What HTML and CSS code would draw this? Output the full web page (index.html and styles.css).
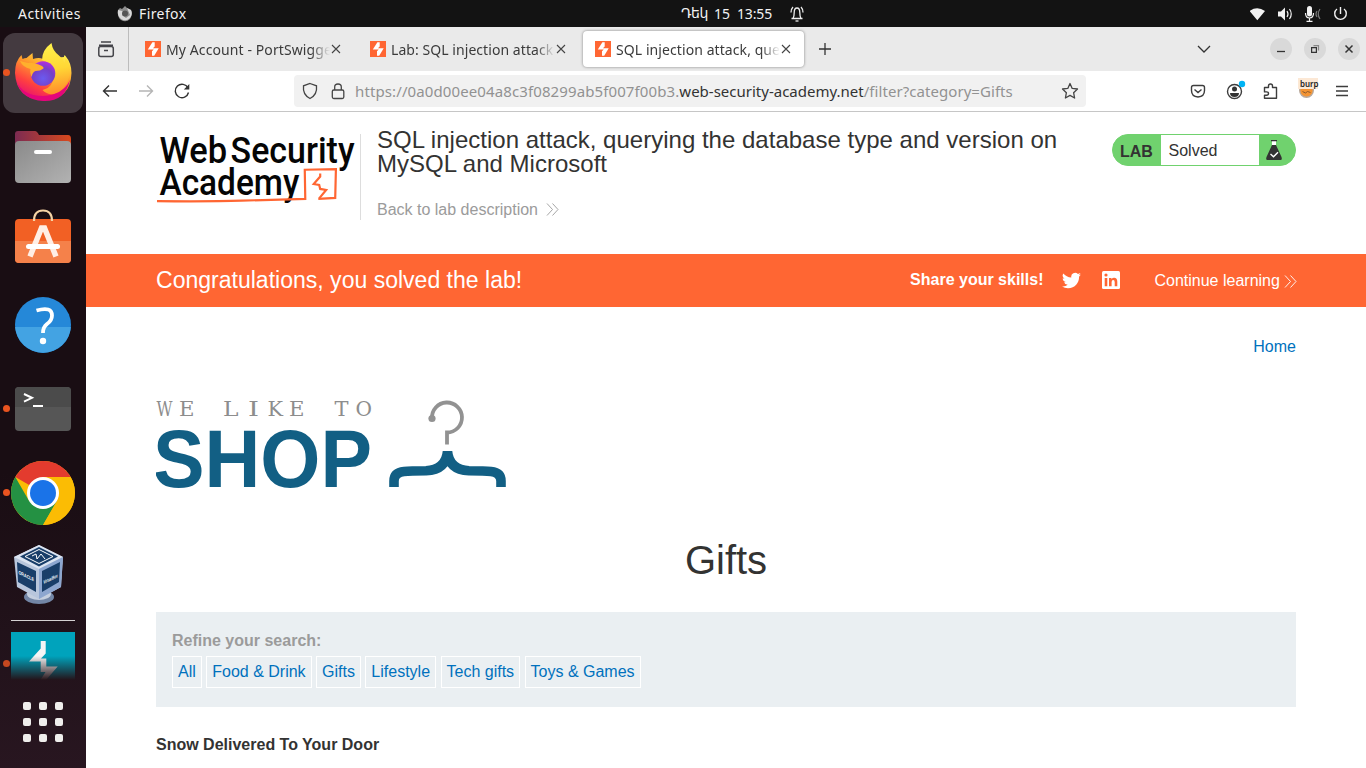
FILE: index.html
```html
<!DOCTYPE html>
<html lang="en">
<head>
<meta charset="utf-8">
<title>SQL injection attack, querying the database type and version</title>
<link rel="stylesheet" href="styles.css">
</head>
<body>
<svg class="defs" width="0" height="0">
  <defs>
    <linearGradient id="fire" x1=".8" y1="0" x2=".2" y2="1"><stop offset="0" stop-color="#fff44f"/><stop offset=".35" stop-color="#ffa52b"/><stop offset=".7" stop-color="#ff4040"/><stop offset="1" stop-color="#e4067b"/></linearGradient>
    <radialGradient id="globe" cx=".5" cy=".7" r=".7"><stop offset="0" stop-color="#6a5bf0"/><stop offset=".6" stop-color="#7540c8"/><stop offset="1" stop-color="#b52de0"/></radialGradient>
    <linearGradient id="tail" x1=".5" y1="0" x2=".6" y2="1"><stop offset="0" stop-color="#fff04a"/><stop offset=".5" stop-color="#ffd735"/><stop offset="1" stop-color="#ff8a2a"/></linearGradient>
    <linearGradient id="folder"><stop offset="0" stop-color="#7c2b52"/><stop offset="1" stop-color="#d9491d"/></linearGradient>
    <linearGradient id="steel" x1="0" y1="0" x2="1" y2="1"><stop offset="0" stop-color="#8a8a8a"/><stop offset="1" stop-color="#b2b2b2"/></linearGradient>
    <linearGradient id="fade" x1="0" y1="0" x2="0" y2="1"><stop offset=".5" stop-color="#241319" stop-opacity="0"/><stop offset="1" stop-color="#241319"/></linearGradient>
    <symbol id="ps" viewBox="0 0 16 16"><path fill="#ff6633" d="M0 0h16v16H0z"/><path fill="#fff" d="M7.400 1.200h2.300v4.300L7.900 7.300h5.800L9.200 14.800H7v-4.600l1.700-1.800H2.800z"/></symbol>
    <symbol id="close" viewBox="0 0 10 10"><path d="M1 1l8 8M9 1L1 9" stroke="#444" stroke-width="1.100" fill="none"/></symbol>
    <symbol id="chev" viewBox="0 0 13 13"><path d="M1 .5l5.500 6L1 12.500M6.500 .5l5.500 6-5.500 6" stroke="currentColor" stroke-width=".9" fill="none"/></symbol>
  </defs>
</svg>

<header class="topbar">
  <span class="activities">Activities</span>
  <span class="app"><svg width="16" height="16" viewBox="117 5 16 16"><path fill="#8e8e8e" d="M118 9l2-2 2 1 3-3 2 2 4 2q2 5-1 9-4 4-9 1-4-3-3-10z"/><path fill="#d9d9d9" d="M118 9l4 1 3 2-3 2 4 3 4-3-3-7 4 2q2 4-1 8-4 4-9 1-4-3-3-9z"/><circle cx="125" cy="12.500" r="3" fill="#555"/></svg><span class="app-name">Firefox</span></span>
  <span class="clock"><span class="month">Դեկ</span><span class="time">15&nbsp; 13:55</span>
    <svg width="14" height="16" viewBox="790 5 14 16" fill="none" stroke="#eee" stroke-width="1.300"><path d="M791.500 17.500h11M793 17.500q1.200-2 1.200-6 0-4.500 2.800-4.500t2.800 4.500q0 4 1.200 6M793 6q-2 2-2 5.500M801 6q2 2 2 5.500"/><path d="M795.500 20h3"/></svg></span>
  <span class="status">
    <svg width="100" height="18" viewBox="1250 4 100 18"><path fill="#f2f2f2" d="M1249.500 10q7.700-5.500 15.500 0l-7.700 9.300zM1278 10.500h3l4-4v13l-4-4h-3z"/><g stroke="#f2f2f2" fill="none" stroke-width="1.200"><path d="M1287 10q2 3 0 6M1289.500 8q3.500 5 0 10M1305.500 12q0 5 4 5t4-5M1309.500 17v3.500M1306.500 20.300h6"/><path stroke="#777" d="M1317 10q-2 3 0 6M1320 8q-3.500 5 0 10"/><path stroke-width="1.400" d="M1337 8a5.800 5.800 0 1 0 7 0M1340.500 6v7"/></g><rect x="1307" y="5" width="5" height="10.500" rx="2.500" fill="#f2f2f2"/></svg>
  </span>
</header>

<div class="desktop">
<aside class="dock">
  <div class="tile active"><svg viewBox="3 33 80 80">
    <path fill="url(#fire)" d="M15 73q0-12 6.500-18l1 4q2-1 4-1l6-5 .5 6q6-2 10 0l21-2q0-3 1.500-1 6 7 6 17-1 27-28 27T15 73z"/>
    <path fill="url(#tail)" d="M42 60q0-10 9.500-17 1 8 8 13 4 3 5 8l1-6q6 6 4 18-4 15-15 18-8 1-12-4 12-3 10.500-16-2-12-11-14z"/>
    <circle cx="43" cy="73.500" r="12.300" fill="url(#globe)"/>
    <path fill="#ffb02d" d="M20 61l8 2q5-1 14 3 2 1 1.500 2.500-3 2.500-8 2.500-3 1-4 6-2-5-1-8-8-2-10.500-8z"/>
    <path fill="#e4067b" d="M16 80q6 16 27 16 20-1 27-16-5 22-27 21-21-1-27-21z"/></svg></div>
  <div class="tile"><svg viewBox="3 117 80 80"><path fill="url(#folder)" d="M15 145v-11q0-3 3-3h17q2 0 4 4h29q3 0 3 4v8z"/><rect x="15" y="141" width="56" height="42" rx="4" fill="url(#steel)"/><path d="M36 152h14" stroke="#fff" stroke-width="4" stroke-linecap="round"/></svg></div>
  <div class="tile"><svg viewBox="3 201 80 80"><rect x="15" y="219" width="56" height="44" rx="4" fill="#f26024"/><path fill="#f5814a" d="M15 241h56v18q0 4-4 4H19q-4 0-4-4z"/><path d="M34 221q0-10.500 9-10.500t9 10.500" fill="none" stroke="#f5d3a4" stroke-width="2.200"/><path d="M30 256.500L41.500 228h3L56 256.500" fill="none" stroke="#ffeee5" stroke-width="5.500"/><path d="M28.500 246.500h29" stroke="#fff" stroke-width="5" stroke-linecap="round"/></svg></div>
  <div class="tile"><svg viewBox="3 285 80 80"><circle cx="43" cy="325" r="28" fill="#2588d8"/><path fill="#43a3e3" d="M15.100 327a28 28 0 0 0 55.800 0z"/><path d="M36.500 310.500Q52 306 52 315.500q0 5-5 8.500-4 3-4 9" fill="none" stroke="#fff" stroke-width="3.800"/><circle cx="43" cy="341" r="3.200" fill="#fff"/></svg></div>
  <div class="tile running"><svg viewBox="3 369 80 80"><rect x="15" y="387" width="56" height="44" rx="4" fill="#565656"/><path fill="#4b4b4b" d="M15 407v-16q0-4 4-4h48q4 0 4 4v16z"/><path d="M24 394l8 3.800-8 3.800M33 406h10" fill="none" stroke="#fff" stroke-width="2"/></svg></div>
  <div class="tile running"><svg viewBox="3 453 80 80"><circle cx="43" cy="493" r="32" fill="#fbbc04"/><path fill="#e33b2e" d="M43 493L15.300 477a32 32 0 0 1 55.400 0z"/><path fill="#249143" d="M15.300 477A32 32 0 0 0 43 525l13.900-24L43 493l-13.900 8z"/><path fill="#fbbc04" d="M43 477h27.700A32 32 0 0 1 43 525l14-24z"/><circle cx="43" cy="493" r="16" fill="#fff"/><circle cx="43" cy="493" r="13" fill="#1a73e8"/></svg></div>
  <div class="tile"><svg viewBox="3 537 80 80"><ellipse cx="39" cy="597" rx="15" ry="7" fill="#7386a6"/><ellipse cx="39" cy="594" rx="12" ry="6" fill="#c5cfdf"/><path fill="#b8c6dc" d="M14 557l25-12 24 12-2 30-22 12-22-12z"/><path fill="#dce4f1" d="M14 557l25-12 24 12-24 12z"/><path fill="#8da6cf" d="M63 557l-24 12v30l22-12z"/><path fill="#193e69" d="M20 556.500l19-9.500 19 9.500-19 10zM17 562l19 9v21l-18-10zM60 562l-18 9v21l17-10z"/><path d="M25 556.500l14-7 14 7-14 7zM32 556l4-2 1 5 4-5 4 5" fill="none" stroke="#fff"/><text class="box-label" transform="matrix(1 .48 0 1 18.500 574)" textLength="15.500" lengthAdjust="spacingAndGlyphs">ORACLE</text><text class="box-label" transform="matrix(1 -.48 0 1 43.500 584)" textLength="14" lengthAdjust="spacingAndGlyphs">VirtualBox</text></svg></div>
  <div class="dock-line"></div>
  <div class="burp running"><svg width="64" height="48" viewBox="11 632 64 48"><path fill="#00a3bc" d="M11 632h64v48H11z"/><path fill="#f5f5f5" d="M40.700 641h5v12.500l-4.700 5h5.300v8h11.400L46 680h-5.500l5-8h-4.800v-10.500H29l11.700-13z"/><path fill="url(#fade)" d="M11 632h64v48H11z"/></svg></div>
  <div class="apps"><i></i><i></i><i></i><i></i><i></i><i></i><i></i><i></i><i></i></div>
</aside>

<main class="window">
  <div class="tabs">
    <div class="recent"><svg width="18" height="18" viewBox="97 40 18 18" fill="none" stroke="#45454a" stroke-width="1.500"><path d="M101 42h10M99 45.200h14"/><rect x="98.800" y="46.500" width="14.500" height="10" rx="2"/><path d="M104 50.500h4"/></svg></div>
    <div class="tab"><svg class="fav"><use href="#ps"/></svg><span class="tab-title t1">My Account - PortSwigge</span><svg class="x"><use href="#close"/></svg></div>
    <div class="tab"><svg class="fav"><use href="#ps"/></svg><span class="tab-title t2">Lab: SQL injection attack</span><svg class="x"><use href="#close"/></svg></div>
    <div class="tab current"><svg class="fav"><use href="#ps"/></svg><span class="tab-title t3">SQL injection attack, que</span><svg class="x"><use href="#close"/></svg></div>
    <svg class="plus" width="14" height="14" viewBox="0 0 14 14"><path d="M7 1v12M1 7h12" stroke="#333" stroke-width="1.300"/></svg>
    <svg class="down" width="14" height="10" viewBox="0 0 14 10"><path d="M1 2l6 6 6-6" fill="none" stroke="#333" stroke-width="1.300"/></svg>
    <div class="controls">
      <span><svg viewBox="0 0 22 22"><path d="M7 13.500h8" stroke="#333" stroke-width="1.300"/></svg></span>
      <span><svg viewBox="0 0 22 22" fill="none" stroke="#333" stroke-width="1.200"><path d="M7.600 9.600h4.800v4.800H7.600z"/><path stroke="#888" d="M9.500 7.600h5v5"/></svg></span>
      <span><svg viewBox="0 0 22 22"><path d="M7.500 7.500l7 7M14.500 7.500l-7 7" stroke="#333" stroke-width="1.500"/></svg></span>
    </div>
  </div>
  <div class="nav">
    <svg width="110" height="40" viewBox="86 71 110 40" fill="none" stroke="#333" stroke-width="1.400"><path d="M117 91h-13.500M109 85.500l-5.500 5.500 5.500 5.500"/><path stroke="#b5b5b5" d="M139 91h13.500M147 85.500l5.500 5.500-5.500 5.500"/><path d="M188 88a6.700 6.700 0 1 0 .5 4.500"/><path fill="#333" stroke="none" d="M189.300 84v5.500h-5.500z"/></svg>
    <div class="url">
      <svg width="50" height="32" viewBox="300 75 50 32" fill="none" stroke="#454545" stroke-width="1.300"><path d="M310 83.500l6.500 2.300q1 9-6.500 12.700-7.500-3.700-6.500-12.700z"/><rect x="332.300" y="90" width="11.500" height="8.500" rx="1.500"/><path d="M334.700 90v-3q0-3 3.300-3t3.300 3v3"/></svg>
      <span class="address"><span class="u1">https://0a0d00ee04a8c3f08299ab5f007f00b3.</span><b>web-security-academy.net</b><span class="u3">/filter?category=Gifts</span></span>
      <svg class="star" width="18" height="18" viewBox="0 0 18 18"><path d="M9 1.500l2.200 4.900 5.300.6-3.900 3.700 1 5.300L9 13.400 4.400 16l1-5.300L1.500 7l5.300-.6z" fill="none" stroke="#454545" stroke-width="1.300" stroke-linejoin="round"/></svg>
    </div>
    <svg class="tools" width="170" height="30" viewBox="1186 76 170 30" fill="none" stroke="#3d3d3d" stroke-width="1.400"><path d="M1193.500 85.500h9q2 0 2 2v3q0 6-6.500 6.500-6.500-.5-6.500-6.500v-3q0-2 2-2zM1194.500 89.500l3.500 3 3.500-3"/><circle cx="1234.500" cy="91.500" r="7"/><circle cx="1234.500" cy="89" r="2.500" fill="#333" stroke="none"/><path fill="#333" stroke="none" d="M1230 93h9q0 4-4.500 4t-4.500-4z"/><circle cx="1242" cy="84" r="3.200" fill="#00b3f4" stroke="none"/><path d="M1264.500 87.500h4v-1.500q0-2 2-2t2 2v1.500h4v10.800h-12v-3h2q2 0 2-1.700t-2-1.700h-2z" stroke-linejoin="round"/><circle cx="1306.500" cy="90.500" r="6.800" fill="#f49433" stroke="#b8a99d"/><path d="M1302.500 91.500l3 1.500 2-1.500 3 1" stroke="#8a5a2e" stroke-width="1"/><path fill="#fce8d5" stroke="none" d="M1298 78h20v11h-20z"/><path d="M1336 86.500h12M1336 91h12M1336 95.500h12"/><text class="burp-label" x="1300" y="87" textLength="18.500" lengthAdjust="spacingAndGlyphs">burp</text></svg>
  </div>

  <div class="page">
    <div class="lab-head">
      <svg class="academy" width="205" height="86" viewBox="156 134 205 86"><g class="logo-text"><text x="159.500" y="162.500" textLength="68" lengthAdjust="spacingAndGlyphs">Web</text><text x="231" y="162.500" textLength="124.500" lengthAdjust="spacingAndGlyphs">Security</text><text x="159.500" y="195.500" textLength="140.500" lengthAdjust="spacingAndGlyphs">Academy</text></g><path d="M157 201.300q55 .5 85-.5l64-1.800-.5-29.300 31.300-.7-.7 29-17 1" fill="none" stroke="#ff6633" stroke-width="2.200"/><path d="M321 173.500v3l-6.500 7.500 5.500 1 1 4 6 1-7 8.500" fill="none" stroke="#ff6633" stroke-width="2.200"/></svg>
      <div class="lab-title"><h2>SQL injection attack, querying the database type and version on MySQL and Microsoft</h2><a class="back">Back to lab description <svg class="chev"><use href="#chev"/></svg></a></div>
      <div class="badge"><strong>LAB</strong><span>Solved</span><svg width="36" height="30" viewBox="1259 135 36 30"><path fill="#fff" d="M1272 141h4v6h-4z"/><path fill="#333" d="M1271 140h6v1.300h-6zM1272 145h4l5.500 12q1 3-1 3h-13q-2 0-1-3z"/><path d="M1270.500 154l3 2.800 4.500-4.600" fill="none" stroke="#fff" stroke-width="1.400"/></svg></div>
    </div>
    <div class="congrats">
      <h4>Congratulations, you solved the lab!</h4>
      <div class="share"><strong>Share your skills!</strong>
        <svg class="twitter" width="19" height="17" viewBox="0 2 24 20"><path fill="#fff" d="M23.950 4.570a10 10 0 0 1-2.820.77 4.960 4.960 0 0 0 2.160-2.720c-.95.550-2 .95-3.130 1.180a4.920 4.920 0 0 0-8.380 4.480C7.690 8.090 4.070 6.130 1.640 3.160a4.920 4.920 0 0 0 1.520 6.570 4.900 4.900 0 0 1-2.230-.61v.06a4.920 4.920 0 0 0 3.950 4.830 5 5 0 0 1-2.210.08 4.940 4.940 0 0 0 4.600 3.420A9.870 9.870 0 0 1 0 19.540a14 14 0 0 0 7.550 2.210c9.050 0 14-7.500 14-13.980 0-.21 0-.42-.02-.63a9.900 9.900 0 0 0 2.420-2.570z"/></svg>
        <svg class="linkedin" width="18" height="18" viewBox="0 0 18 18"><rect width="18" height="18" rx="1.500" fill="#fff"/><path fill="#ff6633" d="M2.700 7h2.600v8.300H2.700zM7 7h2.500v1.200q.9-1.400 2.600-1.400 3.200 0 3.200 3.900v4.600h-2.600v-4.100q0-2.100-1.500-2.100-1.600 0-1.600 2.100v4.100H7z"/><circle cx="4" cy="4" r="1.600" fill="#ff6633"/></svg>
        <a class="continue">Continue learning <svg class="chev"><use href="#chev"/></svg></a></div>
    </div>
    <div class="store">
      <a class="home">Home</a>
      <svg class="shop" width="352" height="92" viewBox="156 398 352 92"><g class="slogan"><text x="156.500" y="415.700" textLength="16" lengthAdjust="spacingAndGlyphs">W</text><text x="179" y="415.700" textLength="15.500" lengthAdjust="spacingAndGlyphs">E</text><text x="223" y="415.700" textLength="15.500" lengthAdjust="spacingAndGlyphs">L</text><text x="248" y="415.700" textLength="11" lengthAdjust="spacingAndGlyphs">I</text><text x="267.500" y="415.700" textLength="15.500" lengthAdjust="spacingAndGlyphs">K</text><text x="289" y="415.700" textLength="15.500" lengthAdjust="spacingAndGlyphs">E</text><text x="334.500" y="415.700" textLength="14" lengthAdjust="spacingAndGlyphs">T</text><text x="355.500" y="415.700" textLength="16.500" lengthAdjust="spacingAndGlyphs">O</text></g><text class="shop-word" x="153" y="487" textLength="219" lengthAdjust="spacingAndGlyphs">SHOP</text><path d="M432 418.500a15 15 0 1 1 15 14v12" fill="none" stroke="#929292" stroke-width="3.800"/><circle cx="432" cy="418.500" r="3.600" fill="#929292"/><path d="M394 487v-6q0-8.500 10-9.500 6-.7 22-.7 20-1 21.500-19.300 1.500 18.300 21.500 19.300 16 0 22 .7 10 1 10 9.500v6" fill="none" stroke="#125f84" stroke-width="9.600"/></svg>
      <h1>Gifts</h1>
      <section class="filters"><strong>Refine your search:</strong><div class="links"><a>All</a><a>Food &amp; Drink</a><a>Gifts</a><a>Lifestyle</a><a>Tech gifts</a><a>Toys &amp; Games</a></div></section>
      <h3>Snow Delivered To Your Door</h3>
    </div>
  </div>
</main>
</div>
</body>
</html>
```
FILE: styles.css
```css
* { box-sizing: border-box; }
body { margin: 0; width: 1366px; height: 768px; overflow: hidden; font-family: "Liberation Sans", Arial, sans-serif; font-size: 16px; color: #333332; background: #fff; }
svg { display: block; flex-shrink: 0; }
.defs { position: absolute; }
h1, h2, h3, h4 { margin: 0; font-weight: 400; }

.topbar { display: flex; align-items: center; height: 27px; background: #131313; color: #f2f2f2; font: 14px/27px "Noto Sans", "DejaVu Sans", sans-serif; white-space: nowrap; }
.activities { padding-left: 18px; width: 117px; letter-spacing: .45px; }
.app { display: flex; align-items: center; gap: 6px; width: 564px; }
.app-name { letter-spacing: .4px; }
.clock { display: flex; align-items: center; width: 569px; }
.month { font-family: "DejaVu Sans", sans-serif; font-size: 14px; width: 33px; letter-spacing: -.5px; }
.time { width: 76px; letter-spacing: -.1px; }

.desktop { display: flex; height: 741px; }
.dock { width: 86px; padding: 6px 3px 0; background: linear-gradient(#190d13 60%, #281620); display: flex; flex-direction: column; gap: 4px; flex-shrink: 0; }
.tile { width: 80px; height: 80px; border-radius: 12px; position: relative; flex-shrink: 0; }
.tile svg { width: 80px; height: 80px; }
.tile.active { background: #443a40; }
.active::before, .running::before { content: ""; position: absolute; left: 0; top: 36px; width: 7px; height: 7px; border-radius: 50%; background: #e95420; }
.dock-line { height: 1px; width: 64px; margin: -1px 8px 0; background: #d5d2d3; flex-shrink: 0; }
.burp { position: relative; margin-top: 7px; padding-left: 8px; height: 48px; flex-shrink: 0; }
.burp::before { top: 28px; background: #c54820; }
.apps { display: grid; grid-template-columns: repeat(3, 8px); gap: 8px; padding: 18px 20px 0; }
.apps i { height: 8px; border-radius: 2px; background: #efeeec; }
.box-label { font: bold 5px "Liberation Sans", sans-serif; fill: #fff; }

.window { flex: 1; min-width: 0; }
.tabs { display: flex; align-items: center; height: 44px; background: #eaeaea; font: 14px/20px "Noto Sans", sans-serif; white-space: nowrap; }
.recent { width: 43px; height: 44px; padding: 13px 0 0 11px; border-right: 1px solid #bcbcbc; margin-right: 4px; }
.tab { display: flex; align-items: center; width: 221px; height: 36px; margin-right: 4px; padding: 0 12px; border-radius: 4px; flex-shrink: 0; }
.current { background: #fff; box-shadow: 0 0 3px rgba(0,0,0,.45); }
.fav { width: 16px; height: 16px; margin-right: 5px; }
.tab-title { flex: 0 0 164px; min-width: 0; padding-top: 1px; color: #3b3b3b; -webkit-mask-image: linear-gradient(90deg, #000 145px, transparent 164px); mask-image: linear-gradient(90deg, #000 145px, transparent 164px); }
.t1 { letter-spacing: .1px; }
.t2 { letter-spacing: .06px; }
.t3 { letter-spacing: .08px; }
.x { width: 10px; height: 10px; margin-left: 1px; }
.plus { margin-left: 10px; }
.down { margin-left: 365px; }
.controls { display: flex; gap: 12px; margin-left: 59px; }
.controls span { width: 22px; height: 22px; border-radius: 50%; background: #d9d9d9; }
.nav { display: flex; align-items: center; height: 41px; border-bottom: 1px solid #c6c6c6; background: #fff; }
.url { display: flex; align-items: center; width: 792px; height: 32px; margin-left: 98px; padding-left: 6px; border-radius: 4px; background: #f1f1f1; }
.address { flex: 1; padding-left: 5px; font: 15px/20px "Noto Sans", sans-serif; color: #929292; white-space: nowrap; }
.address b { font-weight: 400; color: #333; }
.u1 { letter-spacing: .11px; }
.u3 { letter-spacing: .06px; }
.star { margin-right: 7px; }
.tools { margin-left: 100px; }
.burp-label { font: 600 9.500px "Noto Sans", sans-serif; fill: #222; stroke: none; }

.page { background: #fff; }
.lab-head { display: flex; align-items: flex-start; height: 142px; padding: 22px 70px 0; }
.academy { border-right: 1px solid #ddd; }
.lab-title { width: 700px; padding: 0 0 0 16px; margin-top: -6px; }
.lab-title h2 { font-size: 24px; line-height: 24px; letter-spacing: .01px; }
.back { display: flex; align-items: center; gap: 8px; margin-top: 24px; line-height: 19px; color: #9b9b9b; }
.chev { width: 13px; height: 13px; }
.badge { display: flex; width: 184px; height: 32px; margin-left: auto; border: 1px solid #70d26e; border-radius: 16px; background: #70d26e; line-height: 32px; overflow: hidden; }
.badge strong { width: 48px; padding: 1px 0 0 7px; }
.badge span { width: 98px; padding-left: 7.500px; background: #fff; }
.congrats { display: flex; align-items: center; justify-content: space-between; height: 53px; padding: 0 70px; background: #ff6633; color: #fff; }
.congrats h4 { font-size: 23.040px; }
.share { display: flex; align-items: center; }
.share strong { margin-top: -2px; }
.twitter { margin-left: 19px; margin-top: -1px; }
.linkedin { margin-left: 20.500px; margin-top: -1px; }
.continue { display: flex; align-items: center; gap: 4px; margin-left: 34.500px; padding-top: 1px; margin-right: -.9px; }
.store { display: flex; flex-direction: column; padding: 30px 70px 0; }
.home { align-self: flex-end; line-height: 19px; color: #0071bd; }
.shop { margin-top: 42px; }
.slogan { font: 21px "DejaVu Serif", serif; fill: #8d8d8d; }
.shop-word { font: bold 81px "Liberation Sans", Arial, sans-serif; fill: #125f84; }
.logo-text { font: 500 37px Roboto, sans-serif; fill: #050505; }
h1 { margin-top: 47px; font-size: 40px; line-height: 46px; text-align: center; }
.filters { height: 95px; margin-top: 29px; padding: 19px 16px; background: #eaeff2; color: #9b9b9b; line-height: 19px; }
.links { display: flex; gap: 4.450px; margin-top: 6px; }
.links a { height: 32px; border: 1px solid #fff; padding: 0 5px; line-height: 30px; color: #0071bd; }
h3 { margin-top: 28px; font-size: 16px; line-height: 19px; font-weight: 700; }
```
